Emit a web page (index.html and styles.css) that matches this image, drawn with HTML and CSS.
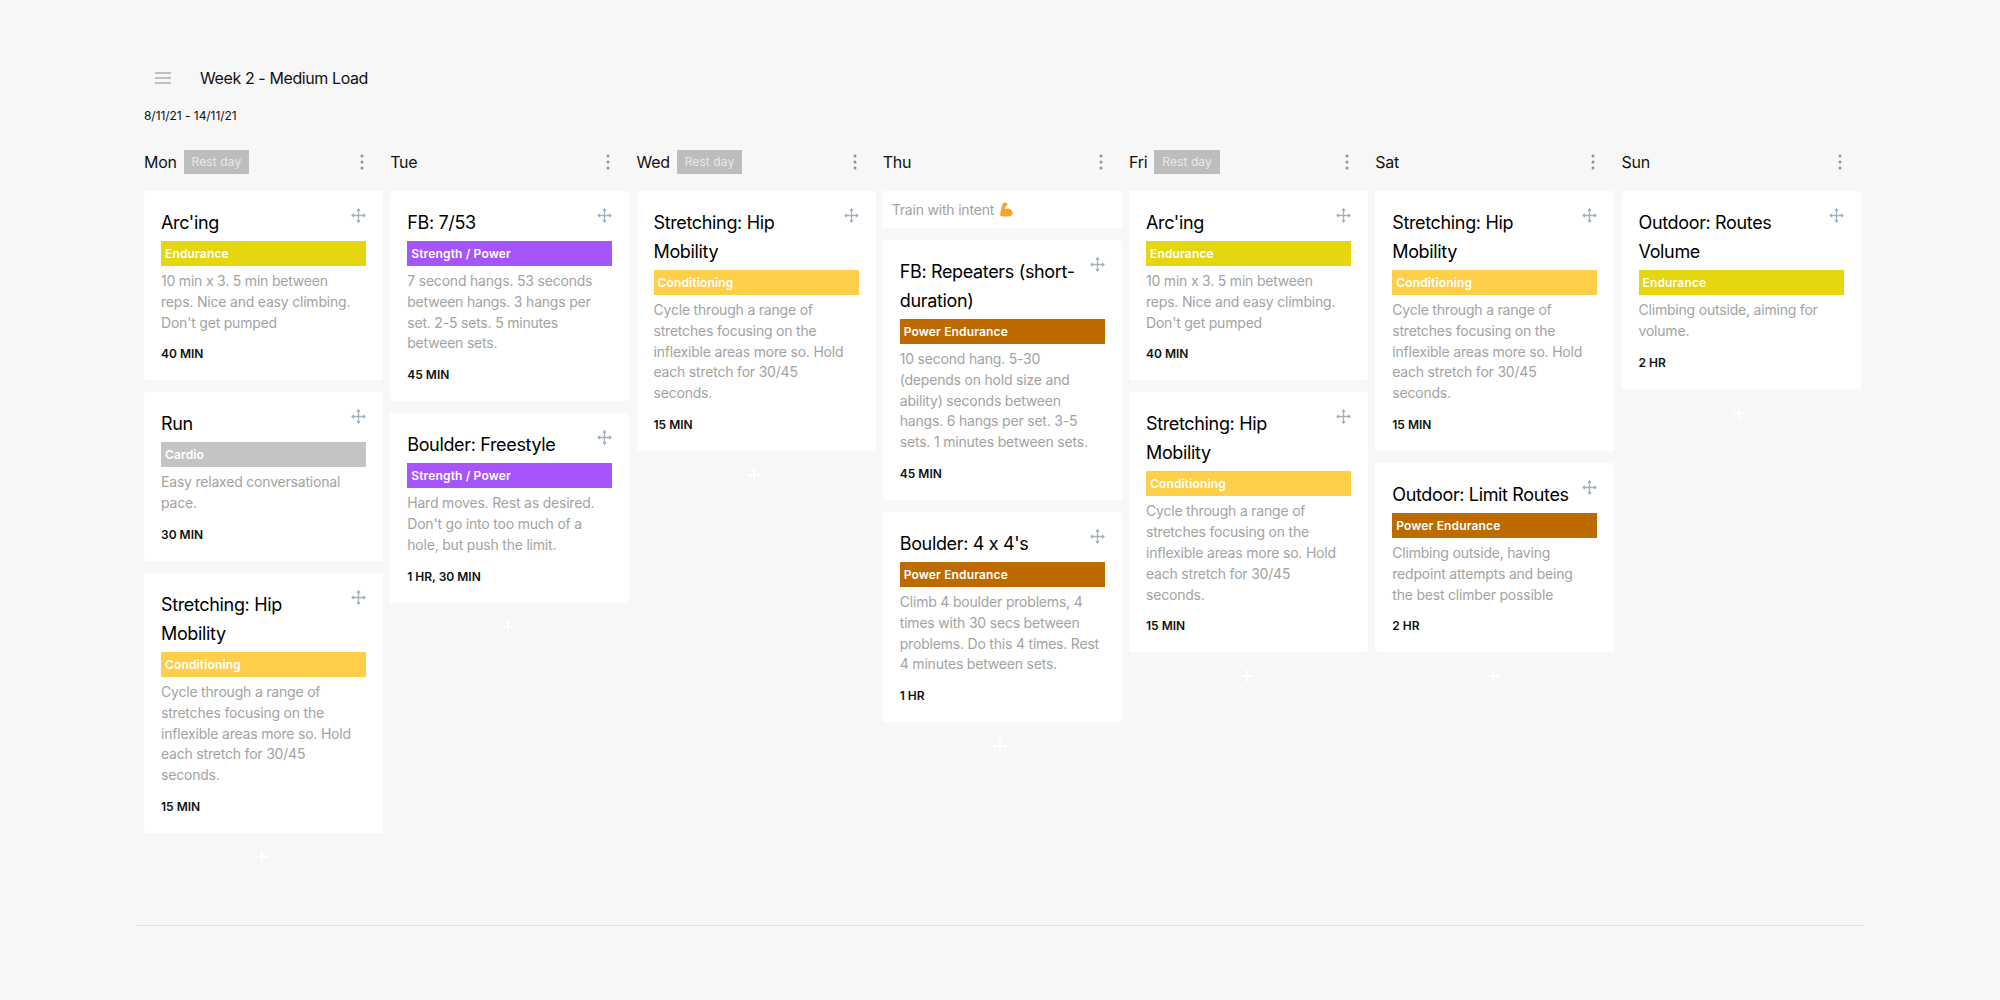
FILE: index.html
```html
<!DOCTYPE html>
<html lang="en">
<head>
    <meta charset="UTF-8">
    <title>Week 2 - Medium Load</title>
    <link rel="stylesheet" href="styles.css">
</head>
<body>
    <svg class="defs" width="0" height="0">
        <symbol id="move" viewBox="0 0 14 14">
            <path d="M7 1v12M1 7h12M5.600 2.600 7 1l1.400 1.600M5.600 11.400 7 13l1.400-1.600M2.600 5.600 1 7l1.600 1.400M11.400 5.600 13 7l-1.600 1.400" fill="none" stroke="#a3afbf" stroke-width="1.200"/>
        </symbol>
        <symbol id="dots" viewBox="0 0 4 16">
            <circle cx="2" cy="2" r="1.500"/><circle cx="2" cy="8" r="1.500"/><circle cx="2" cy="14" r="1.500"/>
        </symbol>
        <symbol id="plus" viewBox="0 0 14 14">
            <path d="M7 1v12M1 7h12" stroke="#ffffff" stroke-width="2"/>
        </symbol>
    </svg>

    <header class="top">
        <svg class="menu" width="16" height="12" viewBox="0 0 16 12"><path d="M0 1h16M0 6h16M0 11h16" stroke="#a9adb3" stroke-width="1.300"/></svg>
        <h1>Week 2 - Medium Load</h1>
    </header>
    <p class="dates">8/11/21 - 14/11/21</p>

    <main class="board">
        <section class="col">
            <div class="col-head"><span class="day">Mon</span><span class="rest">Rest day</span><svg class="kebab"><use href="#dots"/></svg></div>
            <article class="card"><svg class="grip"><use href="#move"/></svg><h2>Arc'ing</h2><div class="tag endurance">Endurance</div><p>10 min x 3. 5 min between reps. Nice and easy climbing. Don't get pumped</p><div class="time">40 MIN</div></article>
            <article class="card"><svg class="grip"><use href="#move"/></svg><h2>Run</h2><div class="tag cardio">Cardio</div><p>Easy relaxed conversational pace.</p><div class="time">30 MIN</div></article>
            <article class="card"><svg class="grip"><use href="#move"/></svg><h2>Stretching: Hip Mobility</h2><div class="tag conditioning">Conditioning</div><p>Cycle through a range of stretches focusing on the inflexible areas more so. Hold each stretch for 30/45 seconds.</p><div class="time">15 MIN</div></article>
            <svg class="add"><use href="#plus"/></svg>
        </section>

        <section class="col">
            <div class="col-head"><span class="day">Tue</span><svg class="kebab"><use href="#dots"/></svg></div>
            <article class="card"><svg class="grip"><use href="#move"/></svg><h2>FB: 7/53</h2><div class="tag strength">Strength / Power</div><p>7 second hangs. 53 seconds between hangs. 3 hangs per set. 2-5 sets. 5 minutes between sets.</p><div class="time">45 MIN</div></article>
            <article class="card"><svg class="grip"><use href="#move"/></svg><h2>Boulder: Freestyle</h2><div class="tag strength">Strength / Power</div><p>Hard moves. Rest as desired. Don't go into too much of a hole, but push the limit.</p><div class="time">1 HR, 30 MIN</div></article>
            <svg class="add"><use href="#plus"/></svg>
        </section>

        <section class="col">
            <div class="col-head"><span class="day">Wed</span><span class="rest">Rest day</span><svg class="kebab"><use href="#dots"/></svg></div>
            <article class="card"><svg class="grip"><use href="#move"/></svg><h2>Stretching: Hip Mobility</h2><div class="tag conditioning">Conditioning</div><p>Cycle through a range of stretches focusing on the inflexible areas more so. Hold each stretch for 30/45 seconds.</p><div class="time">15 MIN</div></article>
            <svg class="add"><use href="#plus"/></svg>
        </section>

        <section class="col">
            <div class="col-head"><span class="day">Thu</span><svg class="kebab"><use href="#dots"/></svg></div>
            <div class="note">Train with intent
                <svg class="flex-arm" width="14" height="15" viewBox="0 0 14 15"><path d="M5 0.500 8 1 8.500 3 6.500 4.500 6 7.500C7.500 6.500 9.500 6 11 7 13 8 14 10 13.500 12 13 14 10.500 14.500 8 14.500 5 14.500 2 14.500 1 13.500 1.500 10 2.500 5 3.500 2Z" fill="#f5a623"/></svg>
            </div>
            <article class="card"><svg class="grip"><use href="#move"/></svg><h2>FB: Repeaters (short-duration)</h2><div class="tag power">Power Endurance</div><p>10 second hang. 5-30 (depends on hold size and ability) seconds between hangs. 6 hangs per set. 3-5 sets. 1 minutes between sets.</p><div class="time">45 MIN</div></article>
            <article class="card"><svg class="grip"><use href="#move"/></svg><h2>Boulder: 4 x 4's</h2><div class="tag power">Power Endurance</div><p>Climb 4 boulder problems, 4 times with 30 secs between problems. Do this 4 times. Rest 4 minutes between sets.</p><div class="time">1 HR</div></article>
            <svg class="add"><use href="#plus"/></svg>
        </section>

        <section class="col">
            <div class="col-head"><span class="day">Fri</span><span class="rest">Rest day</span><svg class="kebab"><use href="#dots"/></svg></div>
            <article class="card"><svg class="grip"><use href="#move"/></svg><h2>Arc'ing</h2><div class="tag endurance">Endurance</div><p>10 min x 3. 5 min between reps. Nice and easy climbing. Don't get pumped</p><div class="time">40 MIN</div></article>
            <article class="card"><svg class="grip"><use href="#move"/></svg><h2>Stretching: Hip Mobility</h2><div class="tag conditioning">Conditioning</div><p>Cycle through a range of stretches focusing on the inflexible areas more so. Hold each stretch for 30/45 seconds.</p><div class="time">15 MIN</div></article>
            <svg class="add"><use href="#plus"/></svg>
        </section>

        <section class="col">
            <div class="col-head"><span class="day">Sat</span><svg class="kebab"><use href="#dots"/></svg></div>
            <article class="card"><svg class="grip"><use href="#move"/></svg><h2>Stretching: Hip Mobility</h2><div class="tag conditioning">Conditioning</div><p>Cycle through a range of stretches focusing on the inflexible areas more so. Hold each stretch for 30/45 seconds.</p><div class="time">15 MIN</div></article>
            <article class="card"><svg class="grip"><use href="#move"/></svg><h2>Outdoor: Limit Routes</h2><div class="tag power">Power Endurance</div><p>Climbing outside, having redpoint attempts and being the best climber possible</p><div class="time">2 HR</div></article>
            <svg class="add"><use href="#plus"/></svg>
        </section>

        <section class="col">
            <div class="col-head"><span class="day">Sun</span><svg class="kebab"><use href="#dots"/></svg></div>
            <article class="card"><svg class="grip"><use href="#move"/></svg><h2>Outdoor: Routes Volume</h2><div class="tag endurance">Endurance</div><p>Climbing outside, aiming for volume.</p><div class="time">2 HR</div></article>
            <svg class="add"><use href="#plus"/></svg>
        </section>
    </main>

    <hr class="rule">
</body>
</html>
```

FILE: styles.css
```css
* {
    box-sizing: border-box;
}

body {
    margin: 0;
    height: 1000px;
    overflow: hidden;
    position: relative;
    background-color: #f7f7f7;
    color: #111111;
    font-family: Inter, "Liberation Sans", sans-serif;
    font-feature-settings: "calt" 0;
    padding: 66px 0 0 144px;
}

.defs {
    position: absolute;
}

.top {
    display: flex;
    align-items: center;
    height: 24px;
    padding-left: 11px;
}

.menu {
    margin-right: 29px;
}

h1 {
    margin: 0;
    font-size: 16px;
    font-weight: 400;
    letter-spacing: -0.4px;
}

.dates {
    margin: 18px 0 0;
    font-size: 12px;
    line-height: 16px;
    letter-spacing: -0.05px;
}

.board {
    display: flex;
    align-items: flex-start;
    gap: 7.250px;
    margin-top: 25px;
}

.col {
    width: 239px;
    display: flex;
    flex-direction: column;
}

.col-head {
    display: flex;
    align-items: center;
    height: 25px;
    margin-bottom: 17px;
}

.day {
    font-size: 16px;
    letter-spacing: -0.3px;
}

.rest {
    margin-left: 7px;
    padding: 0 8px;
    height: 24px;
    line-height: 24px;
    background-color: #bdbdbd;
    color: #e8e8e8;
    font-size: 12px;
    letter-spacing: 0.1px;
}

.kebab {
    margin-left: auto;
    margin-right: 19px;
    width: 4px;
    height: 16px;
    fill: #8f9296;
}

.card {
    position: relative;
    background-color: #ffffff;
    padding: 17px 17px 18px;
    margin-bottom: 12px;
    border-radius: 2px;
}

.grip {
    position: absolute;
    top: 17px;
    right: 17px;
    width: 15px;
    height: 15px;
}

h2 {
    margin: 0;
    padding-right: 20px;
    font-size: 18px;
    font-weight: 400;
    line-height: 29px;
    letter-spacing: -0.35px;
    color: #000000;
}

.tag {
    height: 25px;
    line-height: 25px;
    margin-top: 4px;
    padding-left: 4px;
    color: #ffffff;
    font-size: 12px;
    font-weight: 600;
    letter-spacing: 0.15px;
}

.endurance {
    background-color: #e6d60f;
}

.strength {
    background-color: #a555fb;
}

.conditioning {
    background-color: #ffcf4a;
}

.power {
    background-color: #bd6a00;
}

.cardio {
    background-color: #c4c4c4;
}

.card p {
    margin: 5px 0 0;
    padding-right: 3px;
    font-size: 14px;
    line-height: 20.800px;
    letter-spacing: -0.2px;
    color: #a3a3a3;
}

.time {
    margin-top: 13px;
    font-size: 12px;
    font-weight: 600;
    line-height: 16px;
    color: #111111;
}

.note {
    display: flex;
    align-items: center;
    gap: 5px;
    background-color: #ffffff;
    height: 37px;
    padding-left: 9px;
    margin-bottom: 12px;
    font-size: 14px;
    letter-spacing: -0.2px;
    color: #a3a3a3;
}

.add {
    align-self: center;
    width: 14px;
    height: 14px;
    margin: 5px 4px 0 0;
}

.rule {
    position: absolute;
    left: 136px;
    top: 925px;
    width: 1728px;
    margin: 0;
    border: 0;
    border-top: 1px solid #e2e2e2;
}
```
